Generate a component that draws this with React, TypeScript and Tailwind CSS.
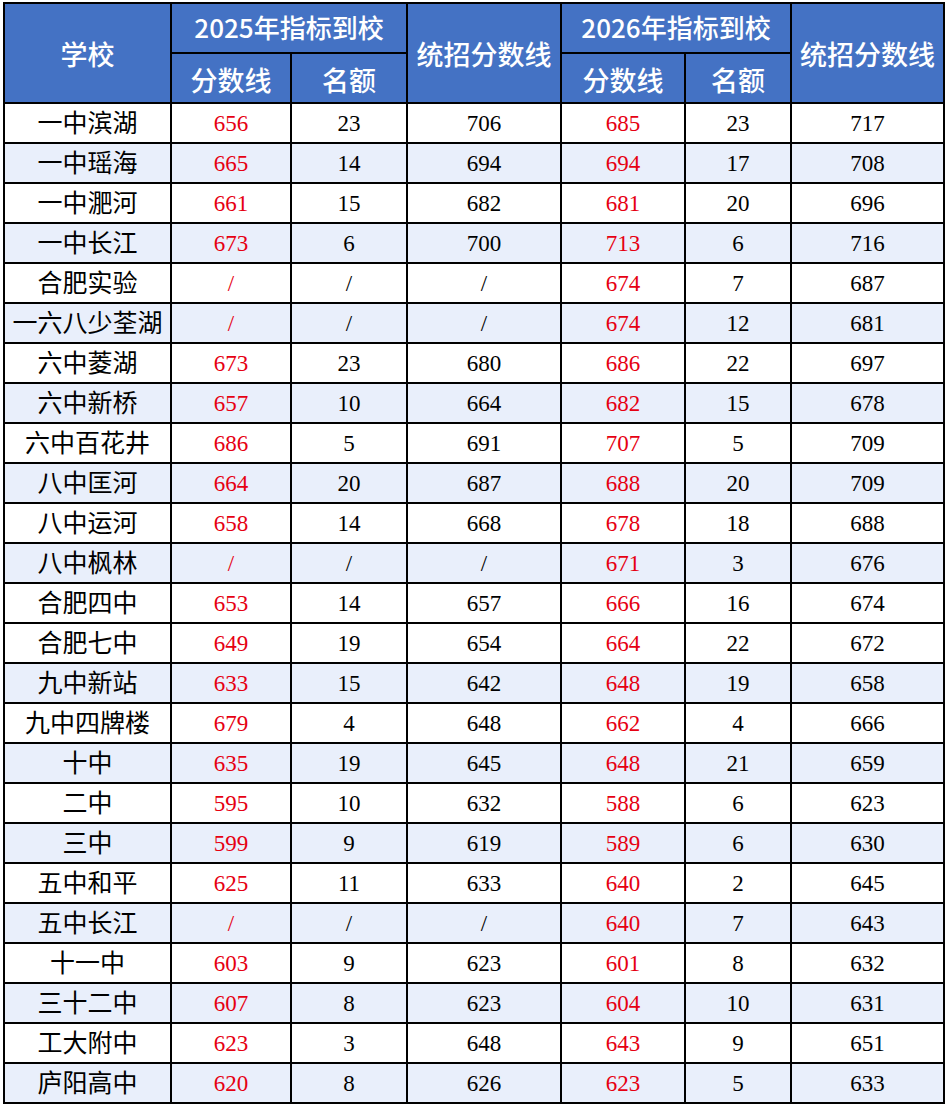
import React from "react";

type Row = [string, string, string, string, string, string, string];

const rows: Row[] = [
  ["一中滨湖", "656", "23", "706", "685", "23", "717"],
  ["一中瑶海", "665", "14", "694", "694", "17", "708"],
  ["一中淝河", "661", "15", "682", "681", "20", "696"],
  ["一中长江", "673", "6", "700", "713", "6", "716"],
  ["合肥实验", "/", "/", "/", "674", "7", "687"],
  ["一六八少荃湖", "/", "/", "/", "674", "12", "681"],
  ["六中菱湖", "673", "23", "680", "686", "22", "697"],
  ["六中新桥", "657", "10", "664", "682", "15", "678"],
  ["六中百花井", "686", "5", "691", "707", "5", "709"],
  ["八中匡河", "664", "20", "687", "688", "20", "709"],
  ["八中运河", "658", "14", "668", "678", "18", "688"],
  ["八中枫林", "/", "/", "/", "671", "3", "676"],
  ["合肥四中", "653", "14", "657", "666", "16", "674"],
  ["合肥七中", "649", "19", "654", "664", "22", "672"],
  ["九中新站", "633", "15", "642", "648", "19", "658"],
  ["九中四牌楼", "679", "4", "648", "662", "4", "666"],
  ["十中", "635", "19", "645", "648", "21", "659"],
  ["二中", "595", "10", "632", "588", "6", "623"],
  ["三中", "599", "9", "619", "589", "6", "630"],
  ["五中和平", "625", "11", "633", "640", "2", "645"],
  ["五中长江", "/", "/", "/", "640", "7", "643"],
  ["十一中", "603", "9", "623", "601", "8", "632"],
  ["三十二中", "607", "8", "623", "604", "10", "631"],
  ["工大附中", "623", "3", "648", "643", "9", "651"],
  ["庐阳高中", "620", "8", "626", "623", "5", "633"],
];

const blueRows = new Set([1, 3, 5, 7, 9, 11, 14, 16, 18, 20, 22, 24]);

const hc =
  "bg-[#4472c4] text-white flex items-center justify-center font-medium leading-none font-['Noto_Sans_CJK_SC','Noto_Sans',sans-serif]";

export default function App() {
  return (
    <div className="w-[948px] h-[1106px] bg-white pt-[2px] pl-[3px]">
      <div className="grid w-[942px] gap-[2px] bg-black p-[2px] grid-cols-[165px_118px_114px_152px_122px_104px_151px]">
        <div className={`${hc} row-span-2 text-[27px]`}>学校</div>
        <div className={`${hc} col-span-2 h-[48px] text-[26px] pb-[2px]`}>2025年指标到校</div>
        <div className={`${hc} row-span-2 text-[27px]`}>统招分数线</div>
        <div className={`${hc} col-span-2 h-[48px] text-[26px] pb-[2px]`}>2026年指标到校</div>
        <div className={`${hc} row-span-2 text-[27px]`}>统招分数线</div>
        <div className={`${hc} h-[48px] text-[27px] pt-[2px]`}>分数线</div>
        <div className={`${hc} h-[48px] text-[27px] pt-[2px]`}>名额</div>
        <div className={`${hc} h-[48px] text-[27px] pt-[2px]`}>分数线</div>
        <div className={`${hc} h-[48px] text-[27px] pt-[2px]`}>名额</div>
        {rows.map((r, i) => {
          const bg = blueRows.has(i) ? "bg-[#e9effb]" : "bg-white";
          return r.map((c, j) => (
            <div
              key={`${i}-${j}`}
              className={`${bg} h-[38px] flex items-center justify-center leading-none font-['Liberation_Serif','Noto_Sans_CJK_SC',serif] ${
                j === 0 ? "text-[25px]" : "text-[23px]"
              } ${j === 1 || j === 4 ? "text-[#e60012]" : "text-black"}`}
            >
              {c}
            </div>
          ));
        })}
      </div>
    </div>
  );
}
